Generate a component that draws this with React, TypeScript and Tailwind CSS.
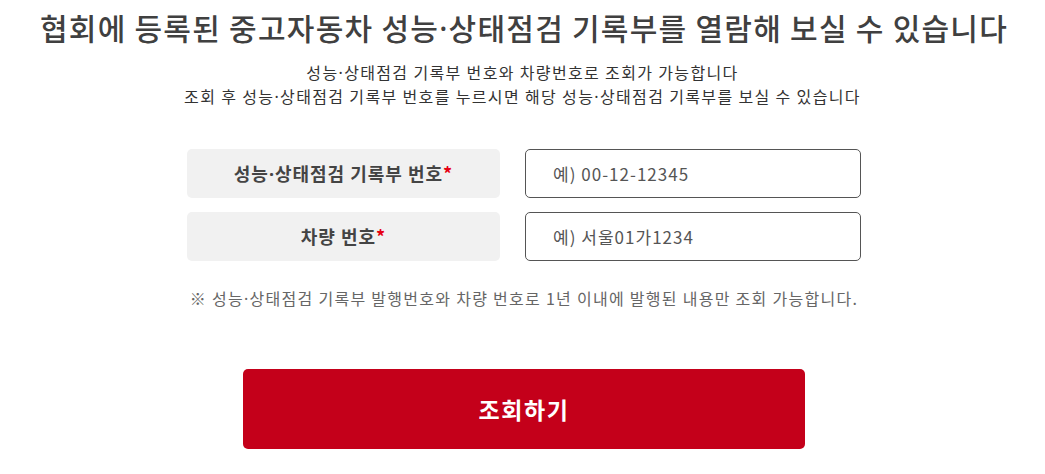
import React from "react";

function Dot() {
  return <span className="font-['Noto_Sans',sans-serif] leading-none">·</span>;
}

export default function App() {
  return (
    <div className="w-[1045px] h-[474px] bg-white flex flex-col items-center" style={{ fontFamily: '"Noto Sans CJK KR", "Noto Sans", sans-serif' }}>
      <h1 className="mt-[5px] h-[44px] text-[30px] leading-[44px] font-medium text-[#404040] tracking-[0.042em] pl-[3px]">
        협회에 등록된 중고자동차 성능<Dot />상태점검 기록부를 열람해 보실 수 있습니다
      </h1>
      <div className="mt-[11px] text-center text-[16px] leading-[24px] text-[#333] tracking-[0.085em]">
        <p className="h-[24px]">성능<Dot />상태점검 기록부 번호와 차량번호로 조회가 가능합니다</p>
        <p className="h-[24px]">조회 후 성능<Dot />상태점검 기록부 번호를 누르시면 해당 성능<Dot />상태점검 기록부를 보실 수 있습니다</p>
      </div>
      <div className="mt-[41px] flex flex-col gap-[14px] pl-[3px]">
        <div className="flex gap-[25px]">
          <div className="w-[313px] h-[49px] rounded-[5px] bg-[#f1f1f1] flex items-center justify-center text-[18px] font-bold text-[#444] tracking-[0.055em]">
            <span>성능<Dot />상태점검 기록부 번호<span className="text-[#e60012]">*</span></span>
          </div>
          <div className="w-[336px] h-[49px] rounded-[5px] border border-[#555] flex items-center pl-[27px] text-[17px] text-[#555] tracking-[0.06em]">
            예) 00-12-12345
          </div>
        </div>
        <div className="flex gap-[25px]">
          <div className="w-[313px] h-[49px] rounded-[5px] bg-[#f1f1f1] flex items-center justify-center text-[18px] font-bold text-[#444] tracking-[0.055em]">
            차량 번호<span className="text-[#e60012]">*</span>
          </div>
          <div className="w-[336px] h-[49px] rounded-[5px] border border-[#555] flex items-center pl-[27px] text-[17px] text-[#555] tracking-[0.06em]">
            예) 서울01가1234
          </div>
        </div>
      </div>
      <p className="mt-[25px] h-[24px] text-[16px] leading-[24px] text-[#666] tracking-[0.08em] pl-[3px]">
        ※ 성능<Dot />상태점검 기록부 발행번호와 차량 번호로 1년 이내에 발행된 내용만 조회 가능합니다.
      </p>
      <button className="mt-[59px] ml-[3px] w-[562px] h-[80px] rounded-[5px] bg-[#c4001a] text-white text-[23px] font-bold tracking-[0.07em]">
        조회하기
      </button>
    </div>
  );
}
